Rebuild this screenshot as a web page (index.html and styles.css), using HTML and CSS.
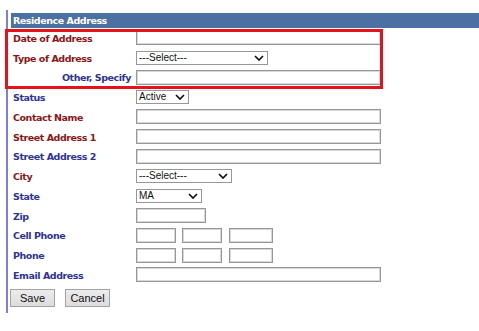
FILE: index.html
```html
<!DOCTYPE html>
<html>
<head>
<meta charset="utf-8">
<link rel="stylesheet" href="styles.css">
</head>
<body>
<div class="panel">
  <div class="header">Residence Address</div>
  <div class="form">
    <div class="lbl req">Date of Address</div>
    <div class="ctl"><input class="txt wide" type="text"></div>

    <div class="lbl req">Type of Address</div>
    <div class="ctl"><span class="sel w-type"><span class="val">---Select---</span><svg class="chev" viewBox="0 0 10 6"><path d="M1 1 L5 5 L9 1" /></svg></span></div>

    <div class="lbl opt right">Other, Specify</div>
    <div class="ctl"><input class="txt wide" type="text"></div>

    <div class="lbl opt">Status</div>
    <div class="ctl"><span class="sel w-status"><span class="val">Active</span><svg class="chev" viewBox="0 0 10 6"><path d="M1 1 L5 5 L9 1" /></svg></span></div>

    <div class="lbl req">Contact Name</div>
    <div class="ctl"><input class="txt wide" type="text"></div>

    <div class="lbl req">Street Address 1</div>
    <div class="ctl"><input class="txt wide" type="text"></div>

    <div class="lbl opt">Street Address 2</div>
    <div class="ctl"><input class="txt wide" type="text"></div>

    <div class="lbl req">City</div>
    <div class="ctl"><span class="sel w-city"><span class="val">---Select---</span><svg class="chev" viewBox="0 0 10 6"><path d="M1 1 L5 5 L9 1" /></svg></span></div>

    <div class="lbl opt">State</div>
    <div class="ctl"><span class="sel w-state"><span class="val">MA</span><svg class="chev" viewBox="0 0 10 6"><path d="M1 1 L5 5 L9 1" /></svg></span></div>

    <div class="lbl opt">Zip</div>
    <div class="ctl"><input class="txt zip" type="text"></div>

    <div class="lbl opt">Cell Phone</div>
    <div class="ctl phone"><input class="txt p1" type="text"><input class="txt p2" type="text"><input class="txt p3" type="text"></div>

    <div class="lbl opt">Phone</div>
    <div class="ctl phone"><input class="txt p1" type="text"><input class="txt p2" type="text"><input class="txt p3" type="text"></div>

    <div class="lbl opt">Email Address</div>
    <div class="ctl"><input class="txt wide" type="text"></div>
  </div>
  <div class="buttons">
    <button class="btn">Save</button>
    <button class="btn">Cancel</button>
  </div>
</div>
<div class="highlight"></div>
</body>
</html>
```

FILE: styles.css
```css
html, body {
  margin: 0;
  padding: 0;
  background: #ffffff;
}
body {
  font-family: "DejaVu Sans", Verdana, sans-serif;
  font-size: 9.5px;
  font-weight: bold;
  letter-spacing: -0.45px;
  position: relative;
  width: 479px;
  height: 331px;
  overflow: hidden;
}
.panel {
  margin: 10px 0 0 6px;
  border-left: 2px solid #7d7de3;
  padding: 3px 0 6px 2px;
}
.header {
  margin-left: 1px;
  height: 15px;
  line-height: 15px;
  background: #4b71a3;
  color: #ffffff;
  padding-left: 2px;
}
.form {
  display: grid;
  grid-template-columns: 123px 1fr;
  grid-auto-rows: 19.75px;
  padding-left: 3px;
  align-items: center;
}
.lbl {
  white-space: nowrap;
  padding-top: 1px;
}
.lbl.req {
  color: #8a1616;
}
.lbl.opt {
  color: #2e3394;
}
.lbl.right {
  text-align: right;
  padding-right: 5px;
}
.ctl {
  display: flex;
  align-items: center;
}
.txt {
  box-sizing: border-box;
  height: 15px;
  margin: 0;
  padding: 0;
  border: 1px solid #979797;
  box-shadow: inset 0 0 0 1px #d8d8d8;
  background: #ffffff;
  outline: none;
}
.wide { width: 245px; }
.zip { width: 70px; }
.phone { gap: 6px; }
.p1 { width: 40px; }
.p2 { width: 40px; }
.p3 { width: 44px; margin-left: 1px; }
.sel {
  position: relative;
  box-sizing: border-box;
  height: 14px;
  border: 1px solid #979797;
  background: #ffffff;
  font-family: "Liberation Sans", Arial, sans-serif;
  font-size: 10px;
  font-weight: normal;
  letter-spacing: 0;
  line-height: 12px;
  color: #111111;
  padding-left: 2px;
  display: flex;
  align-items: center;
}
.w-type { width: 132px; }
.w-status { width: 53px; }
.w-city { width: 96px; }
.w-state { width: 66px; }
.chev {
  position: absolute;
  right: 3px;
  top: 3px;
  width: 10px;
  height: 6px;
  fill: none;
  stroke: #111111;
  stroke-width: 1.7;
}
.buttons {
  display: flex;
  gap: 10px;
  margin-top: 4px;
}
.btn {
  box-sizing: border-box;
  width: 45px;
  height: 18px;
  margin: 0;
  padding: 0;
  border: 1px solid #a3a3a3;
  background: linear-gradient(#ececec, #dcdcdc);
  font-family: "Liberation Sans", Arial, sans-serif;
  font-size: 11px;
  font-weight: normal;
  letter-spacing: 0;
  color: #111111;
}
.highlight {
  position: absolute;
  left: 5px;
  top: 29px;
  width: 378px;
  height: 60px;
  box-sizing: border-box;
  border: 3px solid #e4121b;
  pointer-events: none;
}
```
